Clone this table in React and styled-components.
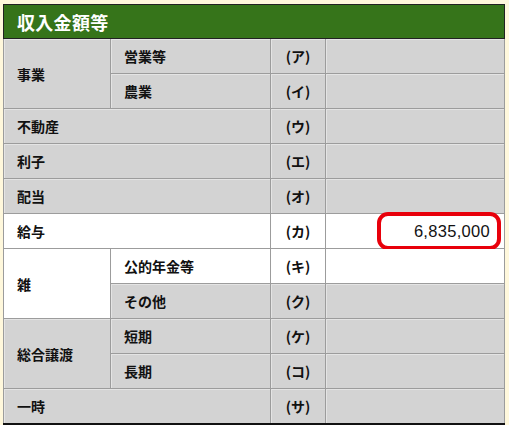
import React from 'react'
import styled, { createGlobalStyle } from 'styled-components'

const GlobalStyle = createGlobalStyle`
    html, body {
        margin: 0;
        padding: 0;
        background-color: #fff8dc;
    }
`;

const Page = styled.div`
    padding: 4px 0 0 3px;
    font-family: "Noto Sans CJK JP", "Noto Sans", sans-serif;
`;

const Table = styled.table`
    width: 502px;
    border-collapse: collapse;
    table-layout: fixed;
    border-bottom: 2px solid #111;
    border-right: 1px solid #f2f2f2;
`;

const Head = styled.th`
    height: 33px;
    padding: 0 0 0 13px;
    background-color: #36741a;
    border: 1px solid #222;
    color: #fff;
    font-size: 18px;
    font-weight: 700;
    text-align: left;
    letter-spacing: 0.3px;
`;

const Cell = styled.td`
    height: 34px;
    padding: 0 0 0 ${props => props.$center ? 0 : 13}px;
    background-color: ${props => props.$white ? '#fff' : '#d3d3d3'};
    border: 1px solid #9c9c9c;
    box-shadow: inset 1px 1px 0 ${props => props.$white ? '#fff' : '#e4e4e4'};
    color: #111;
    font-size: 14px;
    font-weight: 700;
    text-align: ${props => props.$center ? 'center' : 'left'};
    vertical-align: middle;
`;

const ValueCell = styled(Cell)`
    position: relative;
    padding: 0 14px 0 0;
    text-align: right;
    font-family: "Liberation Sans", Arial, sans-serif;
    font-size: 16.5px;
    font-weight: 400;
    letter-spacing: 0.3px;
`;

// red annotation ring drawn over the amount
const Ring = styled.span`
    position: absolute;
    top: -2px;
    bottom: -2px;
    right: 3px;
    width: 116px;
    border: 4px solid #e8000b;
    border-radius: 11px;
`;

const rows = [
    { group: '事業', span: 2, label: '営業等', code: '(ア)' },
    { label: '農業', code: '(イ)' },
    { full: '不動産', code: '(ウ)' },
    { full: '利子', code: '(エ)' },
    { full: '配当', code: '(オ)' },
    { full: '給与', code: '(カ)', white: true, value: '6,835,000', ring: true },
    { group: '雑', span: 2, groupWhite: true, label: '公的年金等', code: '(キ)', white: true },
    { label: 'その他', code: '(ク)' },
    { group: '総合譲渡', span: 2, label: '短期', code: '(ケ)' },
    { label: '長期', code: '(コ)' },
    { full: '一時', code: '(サ)' },
];

export default function App() {
    return (
        <Page>
            <GlobalStyle />
            <Table>
                <colgroup>
                    <col style={{ width: 107 }} />
                    <col style={{ width: 160 }} />
                    <col style={{ width: 55 }} />
                    <col />
                </colgroup>
                <thead>
                    <tr>
                        <Head colSpan={4}>収入金額等</Head>
                    </tr>
                </thead>
                <tbody>
                    {rows.map((r, i) => (
                        <tr key={i}>
                            {r.group && (
                                <Cell rowSpan={r.span} $white={r.groupWhite}>{r.group}</Cell>
                            )}
                            {r.full ? (
                                <Cell colSpan={2} $white={r.white}>{r.full}</Cell>
                            ) : (
                                <Cell $white={r.white}>{r.label}</Cell>
                            )}
                            <Cell $center $white={r.white}>{r.code}</Cell>
                            <ValueCell $white={r.white}>
                                {r.value}
                                {r.ring && <Ring />}
                            </ValueCell>
                        </tr>
                    ))}
                </tbody>
            </Table>
        </Page>
    )
}
